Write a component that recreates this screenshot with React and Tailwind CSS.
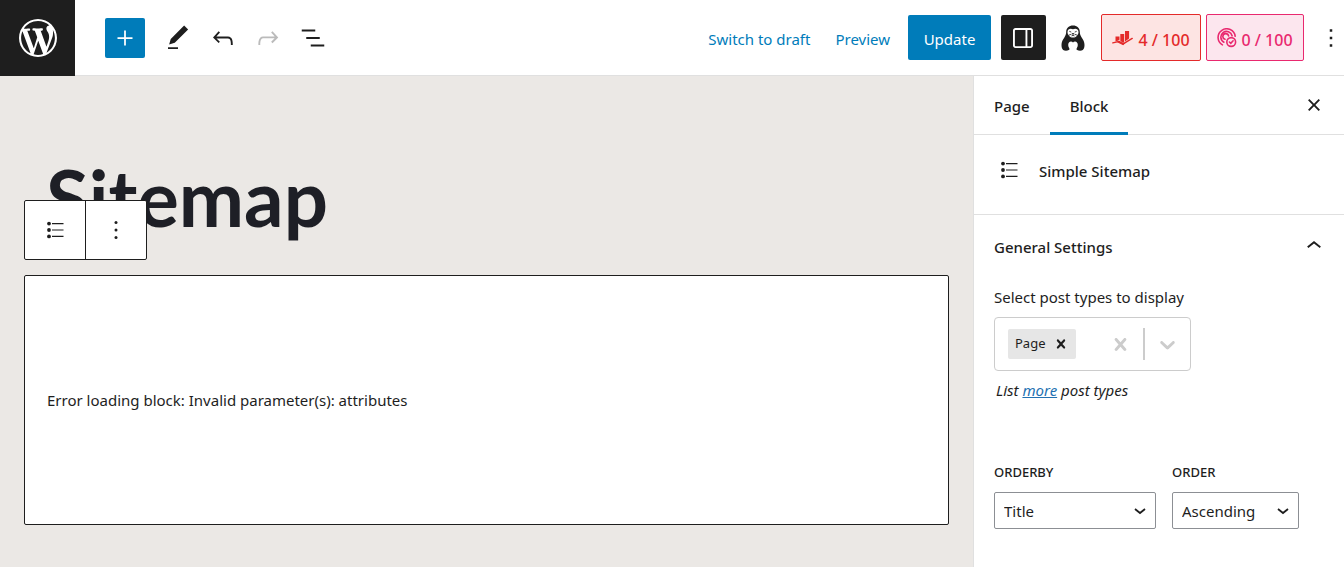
const path = {
  wordpress:
    "M20 10c0-5.51-4.49-10-10-10C4.48 0 0 4.49 0 10c0 5.52 4.48 10 10 10 5.51 0 10-4.48 10-10zM7.78 15.37L4.37 6.22c.55-.02 1.17-.08 1.17-.08.5-.06.44-1.13-.06-1.11 0 0-1.45.11-2.37.11-.18 0-.37 0-.58-.01C4.12 2.69 6.87 1.11 10 1.11c2.33 0 4.45.87 6.05 2.34-.68-.11-1.65.39-1.65 1.58 0 .74.45 1.36.9 2.1.35.61.55 1.36.55 2.46 0 1.49-1.4 5-1.4 5l-3.03-8.37c.54-.02.82-.17.82-.17.5-.05.44-1.25-.06-1.22 0 0-1.44.12-2.38.12-.87 0-2.33-.12-2.33-.12-.5-.03-.56 1.2-.06 1.22l.92.08 1.26 3.41zM17.41 10c.24-.64.74-1.87.43-4.25.7 1.29 1.05 2.71 1.05 4.25 0 3.29-1.73 6.24-4.4 7.78.97-2.59 1.94-5.2 2.92-7.78zM6.1 18.09C3.12 16.65 1.11 13.53 1.11 10c0-1.3.23-2.48.72-3.59C3.25 10.3 4.67 14.2 6.1 18.09zm4.03-6.63l2.58 6.98c-.86.29-1.76.45-2.71.45-.79 0-1.57-.11-2.29-.33.81-2.38 1.62-4.74 2.42-7.1z",
  plus: "M11.3 12.7V18h1.4v-5.3H18v-1.4h-5.3V6h-1.4v5.3H6v1.4z",
  pencil: "M20.1 5.1L16.9 2 6.2 12.7l-1.3 4.4 4.5-1.3L20.1 5.1zM4 20.8h8v-1.5H4v1.5z",
  undo: "M18.3 11.7c-.6-.6-1.4-.9-2.3-.9H6.7l2.9-3.3-1.1-1-4.5 5L8.5 16l1-1-2.7-2.7H16c.5 0 .9.2 1.3.5 1 1 1 3.4 1 4.5v.3h1.5v-.2c0-1.5 0-4.3-1.5-5.7z",
  redo: "M15.6 6.5l-1.1 1 2.9 3.3H8c-.9 0-1.7.3-2.3.9-1.4 1.5-1.4 4.2-1.4 5.6v.2h1.5v-.3c0-1.1 0-3.5 1-4.5.3-.3.7-.5 1.3-.5h9.2L14.5 15l1.1 1.1 4.6-4.6-4.6-5z",
  listView: "M13.8 5.2H3v1.5h10.8V5.2zm-3.6 12v1.5H21v-1.5H10.2zm7.2-6H6.6v1.5h10.8v-1.5z",
  drawer:
    "M18 4H6c-1.1 0-2 .9-2 2v12c0 1.1.9 2 2 2h12c1.1 0 2-.9 2-2V6c0-1.1-.9-2-2-2zm-4 14.5H6c-.3 0-.5-.2-.5-.5V6c0-.3.2-.5.5-.5h8v13zm4.5-.5c0 .3-.2.5-.5.5h-2.5v-13H18c.3 0 .5.2.5.5v12z",
  more: "M13 19h-2v-2h2v2zm0-6h-2v-2h2v2zm0-6h-2V5h2v2z",
  close:
    "M12 13.06l3.712 3.713 1.061-1.06L13.061 12l3.712-3.712-1.06-1.06L12 10.938 8.288 7.227l-1.061 1.06L10.939 12l-3.712 3.712 1.06 1.061L12 13.061z",
  chevronUp: "M6.5 12.4L12 8l5.5 4.4-.9 1.2L12 10l-4.5 3.6-1-1.2z",
  clear:
    "M14.348 14.849c-0.469 0.469-1.229 0.469-1.697 0l-2.651-3.03-2.651 3.029c-0.469 0.469-1.229 0.469-1.697 0-0.469-0.469-0.469-1.229 0-1.697l2.758-3.15-2.759-3.152c-0.469-0.469-0.469-1.228 0-1.697s1.228-0.469 1.697 0l2.652 3.031 2.651-3.031c0.469-0.469 1.228-0.469 1.697 0s0.469 1.229 0 1.697l-2.758 3.152 2.758 3.15c0.469 0.469 0.469 1.229 0 1.698z",
  chevronDown:
    "M4.516 7.548c0.436-0.446 1.043-0.481 1.576 0l3.908 3.747 3.908-3.747c0.533-0.481 1.141-0.446 1.574 0 0.436 0.445 0.408 1.197 0 1.615-0.406 0.418-4.695 4.502-4.695 4.502-0.217 0.223-0.502 0.335-0.787 0.335s-0.57-0.112-0.789-0.335c0 0-4.287-4.084-4.695-4.502s-0.436-1.17 0-1.615z",
};

function Icon({ d, box = 24, className = "size-[30px]" }) {
  return (
    <svg viewBox={`0 0 ${box} ${box}`} className={`shrink-0 ${className}`} fill="currentColor" aria-hidden="true">
      <path d={d} />
    </svg>
  );
}

function SitemapIcon() {
  return (
    <svg viewBox="0 0 20 20" className="size-5 shrink-0" fill="currentColor" aria-hidden="true">
      <circle cx="4" cy="3.600" r="1.900" />
      <circle cx="4" cy="10" r="1.900" />
      <circle cx="4" cy="16.400" r="1.900" />
      <path d="M7 3h11.500v1.200H7zM7 9.400h11.500v1.200H7zM7 15.800h11.500V17H7z" />
    </svg>
  );
}

function DotsIcon() {
  return (
    <svg viewBox="0 0 20 20" className="size-5 shrink-0" fill="currentColor" aria-hidden="true">
      <circle cx="10" cy="2.400" r="1.500" />
      <circle cx="10" cy="10" r="1.500" />
      <circle cx="10" cy="17.600" r="1.500" />
    </svg>
  );
}

function MascotIcon() {
  return (
    <svg viewBox="0 0 24 26" className="h-[26px] w-6" aria-hidden="true">
      <path
        fill="#1e1e1e"
        d="M12 .5C8 .5 5.200 3 5.200 6.800c0 2-.5 3.600-1.700 5.500C1.600 14.800.5 17.400.5 20.100c0 2.300.5 3.900 1.700 4.900 1.300.9 4.200.8 5.600.1.900-.5.8-1.300.3-2.100-.6-.9-.9-1.900-.9-3 0-2 1.200-3.400 2.800-3.400.8 0 1.500.4 2 1 .5-.6 1.200-1 2-1 1.600 0 2.800 1.400 2.800 3.400 0 1.100-.3 2.100-.9 3-.5.8-.6 1.600.3 2.100 1.400.7 4.300.8 5.600-.1 1.200-1 1.700-2.600 1.700-4.900 0-2.700-1.100-5.300-3-7.800-1.200-1.900-1.700-3.500-1.700-5.500C18.800 3 16 .5 12 .5z"
      />
      <path fill="#fff" d="M12 4.300c2.100-1.300 5.500-.6 5.500 2.600 0 3-2.400 5.600-5.500 5.600s-5.500-2.600-5.500-5.600c0-3.200 3.400-3.900 5.500-2.600z" />
      <path
        fill="none"
        stroke="#1e1e1e"
        strokeWidth=".8"
        d="M8.300 6.300l2 .8M15.700 6.300l-2 .8M7.200 10.400l3.300-1.200M16.800 10.400l-3.300-1.200M12 9v1.400M10.500 10.900l1.500-.5 1.500.5"
      />
      <path fill="#1e1e1e" d="M10.700 7.900h2.600L12 9.500z" />
    </svg>
  );
}

function ChartIcon() {
  return (
    <svg viewBox="0 0 22 16" className="h-4 w-[22px]" fill="currentColor" aria-hidden="true">
      <path d="M3.500 6.600h4v3.200l-2.300 1.300-1.700.3zM8.300 4h3.900v8.200l-1.200.8-2.700-2.300zM13 1h4.100v7.600L13 11.600z" />
      <path
        d="M.8 12.900l6.300-1.500 4.100 2.500 9-5.500"
        fill="none"
        stroke="currentColor"
        strokeWidth="1.400"
        strokeLinecap="round"
        strokeLinejoin="round"
      />
      <path d="M4.800 12l2.300-.6 4.100 2.500 3-1.800-3 3.100-4.100-2z" />
    </svg>
  );
}

function TargetIcon() {
  return (
    <svg viewBox="0 0 20 20" className="size-5" fill="none" stroke="currentColor" strokeWidth="1.600" strokeLinecap="round" aria-hidden="true">
      <path d="M5.400 16.900A8.600 8.600 0 1 1 18.200 8.300M6.900 14.200A5.700 5.700 0 1 1 15.100 7.800M8 11.300A2.900 2.900 0 1 1 11.600 7.900" />
      <circle cx="14.200" cy="14" r="4.400" />
      <path d="M12.400 14l1.400 1.400 2.300-2.600" />
    </svg>
  );
}

function SelectField({ id, label, options, className }) {
  return (
    <div className={className}>
      <label htmlFor={id} className="block text-[13px] leading-5 font-medium uppercase">
        {label}
      </label>
      <div className="mt-[10px] grid items-center">
        <select
          id={id}
          className="col-start-1 row-start-1 h-[37px] w-full appearance-none rounded-[2px] border border-[#8c8f94] bg-white pt-px pr-8 pl-[9px] text-[15px]"
        >
          {options.map((option) => (
            <option key={option}>{option}</option>
          ))}
        </select>
        <svg
          viewBox="0 0 12 8"
          className="pointer-events-none col-start-1 row-start-1 mr-[10px] h-2 w-3 justify-self-end"
          fill="none"
          stroke="#1e1e1e"
          strokeWidth="1.800"
          aria-hidden="true"
        >
          <path d="M1 2l5 4 5-4" />
        </svg>
      </div>
    </div>
  );
}

function TopBar() {
  return (
    <header className="flex h-[76px] items-stretch border-b border-[#e0e0e0]">
      <a href="#dashboard" aria-label="View pages" className="-mb-px flex w-[75px] shrink-0 items-center justify-center bg-[#1e1e1e] text-white">
        <Icon d={path.wordpress} box={20} className="size-[38px]" />
      </a>
      <div className="flex items-center pl-[30px]">
        <button aria-label="Add block" className="flex size-10 items-center justify-center rounded-[2px] bg-[#007cba] text-white">
          <Icon d={path.plus} />
        </button>
        <div className="flex items-center gap-[15px] pl-[18px]">
          <button aria-label="Tools"><Icon d={path.pencil} /></button>
          <button aria-label="Undo"><Icon d={path.undo} /></button>
          <button aria-label="Redo" className="text-[#bbb]"><Icon d={path.redo} /></button>
          <button aria-label="List view"><Icon d={path.listView} /></button>
        </div>
      </div>
      <div className="ml-auto flex items-center">
        <button className="pt-[3px] text-[15px] text-[#007cba]">Switch to draft</button>
        <button className="ml-[25px] pt-[3px] text-[15px] text-[#007cba]">Preview</button>
        <button className="ml-[18px] h-[45px] w-[83px] rounded-[2px] bg-[#007cba] pt-[3px] text-[15px] text-white">Update</button>
        <button aria-label="Settings" className="ml-[10px] flex size-[45px] items-center rounded-[2px] bg-[#1e1e1e] pl-[7px] text-white">
          <Icon d={path.drawer} />
        </button>
        <button aria-label="SEO assistant" className="ml-[15px]"><MascotIcon /></button>
        <button className="ml-4 flex h-[47px] w-[100px] items-center justify-center gap-1 rounded-[2px] border border-[#e42a2a] bg-[#fde4e3] text-base font-medium text-[#e42a2a]">
          <ChartIcon />
          <span className="pt-1">4 / 100</span>
        </button>
        <button className="ml-[5px] flex h-[47px] w-[98px] items-center justify-center gap-1 rounded-[2px] border border-[#e9296f] bg-[#fce6ee] text-base font-medium text-[#e9296f]">
          <TargetIcon />
          <span className="pt-1">0 / 100</span>
        </button>
        <button aria-label="Options" className="-mr-0.5 ml-3"><Icon d={path.more} /></button>
      </div>
    </header>
  );
}

function Canvas() {
  return (
    <main className="min-w-0 grow bg-[#ebe8e5] px-6 pt-[76px]">
      <div className="relative">
        <h1 className="pl-[22px] font-[Lato,sans-serif] text-[78px] leading-[90px] font-bold text-[#1e1f26]">Sitemap</h1>
        <div className="absolute top-12 left-0 flex h-[60px] rounded-[2px] border border-[#1e1e1e] bg-white" role="toolbar" aria-label="Block tools">
          <button aria-label="Simple Sitemap" className="flex w-[61px] items-center justify-center border-r border-[#1e1e1e]">
            <SitemapIcon />
          </button>
          <button aria-label="Options" className="flex w-[60px] items-center justify-center">
            <DotsIcon />
          </button>
        </div>
      </div>
      <section className="mt-[33px] flex h-[250px] items-center rounded-[2px] border border-[#1e1e1e] bg-white px-[22px]">
        <p className="text-[15px]">Error loading block: Invalid parameter(s): attributes</p>
      </section>
    </main>
  );
}

function Sidebar() {
  return (
    <aside className="w-[371px] shrink-0 border-l border-[#e0e0e0] bg-white">
      <div className="flex h-[59px] items-stretch border-b border-[#e0e0e0]">
        <div role="tablist" className="flex">
          <button role="tab" aria-selected="false" className="px-5 pt-0.5 text-[15px] font-medium">Page</button>
          <button role="tab" aria-selected="true" className="-mb-px border-b-3 border-[#007cba] px-5 pt-1 text-[15px] font-medium">Block</button>
        </div>
        <button aria-label="Close settings" className="mr-[15px] ml-auto"><Icon d={path.close} /></button>
      </div>
      <div className="flex h-20 items-start gap-5 border-b border-[#e0e0e0] pt-[25px] pl-[25px]">
        <SitemapIcon />
        <h2 className="text-[15px] leading-[22px] font-medium">Simple Sitemap</h2>
      </div>
      <div className="pl-5">
        <button aria-expanded="true" className="flex h-[62px] w-full items-center justify-between pr-[15px] text-[15px] font-medium">
          <span className="pt-0.5">General Settings</span>
          <Icon d={path.chevronUp} />
        </button>
        <label htmlFor="post-types" className="mt-2 block text-[15px] leading-6">Select post types to display</label>
        <div className="mt-2 flex h-[54px] w-[197px] items-center rounded border border-[#ccc]">
          <span className="ml-[13px] flex h-[30px] shrink-0 items-center rounded-[2px] bg-[#e6e6e6] pl-[7px] text-[13px]">
            Page
            <button aria-label="Remove Page" className="px-[6px]">
              <Icon d={path.clear} box={20} className="size-[18px]" />
            </button>
          </span>
          <input id="post-types" className="w-0 min-w-0 grow outline-none" />
          <button aria-label="Clear all" className="px-[10px] text-[#ccc]">
            <Icon d={path.clear} box={20} className="size-[25px]" />
          </button>
          <span className="h-8 w-0.5 bg-[#ccc]" />
          <button aria-label="Open list" className="px-[10px] text-[#ccc]">
            <Icon d={path.chevronDown} box={20} className="size-[25px]" />
          </button>
        </div>
        <p className="mt-[7px] pl-[2px] text-[15px] leading-6 italic">
          List <a href="#post-types" className="text-[#2271b1] underline">more</a> post types
        </p>
        <div className="mt-[60px] flex gap-4">
          <SelectField id="orderby" label="Orderby" options={["Title", "Date"]} className="w-[162px]" />
          <SelectField id="order" label="Order" options={["Ascending", "Descending"]} className="w-[127px]" />
        </div>
      </div>
    </aside>
  );
}

export default function App() {
  return (
    <div className="flex min-h-screen flex-col bg-white font-['Noto_Sans','Open_Sans',sans-serif] text-[#1e1e1e]">
      <TopBar />
      <div className="flex grow items-stretch">
        <Canvas />
        <Sidebar />
      </div>
    </div>
  );
}
